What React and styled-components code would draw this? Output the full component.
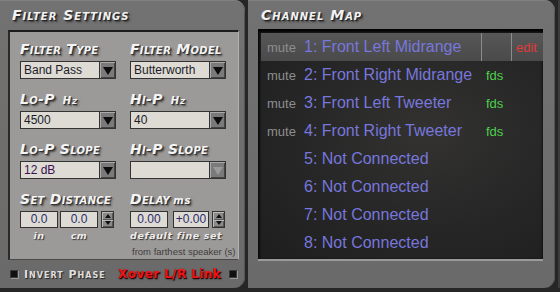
import styled, { createGlobalStyle } from "styled-components";

const GlobalStyle = createGlobalStyle`
  html, body {
    margin: 0;
    padding: 0;
    background: #262626;
    width: 560px;
    height: 292px;
    overflow: hidden;
  }
  * { box-sizing: border-box; }
`;

const Screen = styled.div`
  display: flex;
  gap: 3px;
  height: 288px;
  width: 560px;
`;

const Panel = styled.section`
  width: ${(p) => p.$width}px;
  height: 288px;
  background: linear-gradient(#727272, #6a6a6a);
  border-radius: 0 11px 11px 0;
  box-shadow: inset 0 1px 0 #808080, inset -1px 0 0 #555;
  display: flex;
  flex-direction: column;
`;

const EdgeStrip = styled.div`
  flex: 1;
  background: #747474;
  border-left: 2px solid #3c3c3c;
`;

const Title = styled.h2`
  margin: 0;
  height: ${(p) => p.$h}px;
  padding-left: ${(p) => p.$pl}px;
  display: flex;
  align-items: center;
  font-family: "DejaVu Sans", sans-serif;
  font-weight: bold;
  font-style: italic;
  font-variant: small-caps;
  font-size: 14px;
  letter-spacing: 1px;
  color: #f2f2f2;
  text-shadow: 1px 1px 0 #222, 2px 2px 2px #333;
`;

const Inset = styled.div`
  margin: 0 6px 0 8px;
  height: 230px;
  background: #9c9a98;
  border-top: 2px solid #1c1c1c;
  border-left: 2px solid #2a2a2a;
  border-right: 1px solid #b4b2b0;
  border-bottom: 1px solid #4a4a4a;
  padding: 8px 0 0 10px;
  display: grid;
  grid-template-columns: 96px 96px;
  column-gap: 14px;
  align-content: start;
`;

const Group = styled.div`
  display: flex;
  flex-direction: column;
  margin-bottom: 11px;
`;

const Label = styled.div`
  height: 18px;
  margin-bottom: 3px;
  line-height: 18px;
  white-space: nowrap;
  font-family: "DejaVu Sans", sans-serif;
  font-weight: bold;
  font-style: italic;
  font-variant: small-caps;
  font-size: 14px;
  letter-spacing: 0.3px;
  color: #f4f4f4;
  text-shadow: 1px 1px 0 #333, 2px 2px 2px #444;
`;

const Unit = styled.span`
  font-size: 10px;
  margin-left: ${(p) => (p.$lower ? 3 : 8)}px;
  font-variant: ${(p) => (p.$lower ? "normal" : "small-caps")};
  letter-spacing: 1px;
`;

const Select = styled.div`
  height: 18px;
  display: flex;
  border: 1px solid #333;
  background: #dddbd4;
`;

const SelectText = styled.div`
  flex: 1;
  padding-left: 3px;
  font-family: "Liberation Sans", sans-serif;
  font-size: 12px;
  line-height: 16px;
  color: ${(p) => p.$color || "#1c1c28"};
`;

const DropButton = styled.div`
  width: 16px;
  border-left: 1px solid #333;
  background: #7a7a7a;
  box-shadow: inset 1px 1px 0 #aaa, inset -1px -1px 0 #444;
  display: flex;
  align-items: center;
  justify-content: center;
  &::after {
    content: "";
    border-left: 5px solid transparent;
    border-right: 5px solid transparent;
    border-top: 8px solid ${(p) => (p.$disabled ? "#9a9a9a" : "#0c0c0c")};
    margin-top: 2px;
  }
`;

const NumberRow = styled.div`
  display: flex;
  align-items: center;
  height: 17px;
`;

const NumBox = styled.div`
  width: ${(p) => p.$w}px;
  margin-right: ${(p) => p.$mr}px;
  height: 17px;
  border: 1px solid #333;
  background: #dddbd4;
  text-align: center;
  font-family: "Liberation Sans", sans-serif;
  font-size: 12px;
  line-height: 15px;
  color: #2c2c6a;
`;

const Spinner = styled.div`
  width: 13px;
  height: 17px;
  display: flex;
  flex-direction: column;
  border: 1px solid #333;
  background: #8a8a8a;
`;

const SpinHalf = styled.div`
  flex: 1;
  display: flex;
  align-items: center;
  justify-content: center;
  box-shadow: inset 1px 1px 0 #bbb, inset -1px -1px 0 #555;
  &::after {
    content: "";
    border-left: 3px solid transparent;
    border-right: 3px solid transparent;
    ${(p) => (p.$up ? "border-bottom" : "border-top")}: 4px solid #111;
  }
`;

const SubRow = styled.div`
  display: flex;
  margin-top: 1px;
`;

const SubLabel = styled.div`
  width: ${(p) => p.$w}px;
  margin-right: ${(p) => p.$mr}px;
  text-align: center;
  white-space: nowrap;
  font-family: "DejaVu Sans", sans-serif;
  font-weight: bold;
  font-style: italic;
  font-size: 9.5px;
  letter-spacing: 0.6px;
  line-height: 14px;
  color: #ececec;
  text-shadow: 1px 1px 1px #333;
`;

const Note = styled.div`
  grid-column: 2;
  margin-top: -8px;
  margin-left: 2px;
  white-space: nowrap;
  font-family: "Liberation Sans", sans-serif;
  font-size: 9.5px;
  color: #3e3e3e;
`;

const BottomBar = styled.div`
  flex: 1;
  display: flex;
  align-items: center;
  padding: 0 8px 0 10px;
`;

const Led = styled.div`
  width: 8px;
  height: 8px;
  background: #101010;
  border: 1px solid #3a3a3a;
  box-shadow: 1px 1px 0 #9a9a9a;
`;

const ToggleText = styled.div`
  margin-left: 6px;
  font-family: "DejaVu Sans", sans-serif;
  font-weight: bold;
  font-variant: small-caps;
  font-size: 11px;
  letter-spacing: 1px;
  color: #dedede;
  text-shadow: 1px 1px 1px #222;
`;

const LinkText = styled.div`
  margin-left: auto;
  margin-right: 8px;
  font-family: "DejaVu Sans", sans-serif;
  font-weight: bold;
  font-size: 12px;
  letter-spacing: 0.4px;
  color: #f01414;
  text-shadow: 1px 1px 0 #300, 1px 1px 2px #000;
`;

const MapBox = styled.div`
  margin: 0 12px 0 10px;
  height: 232px;
  padding: 4px 0 0 3px;
  background: radial-gradient(ellipse at 60% 45%, #333231 0%, #262626 55%, #1e1e1e 100%);
  box-shadow: inset 0 3px 3px #000, inset 2px 0 2px #111;
  border-bottom: 2px solid #9a9a9a;
`;

const Row = styled.div`
  display: grid;
  grid-template-columns: 43px 177px 30px 1fr;
  height: 28px;
  align-items: stretch;
  background: ${(p) => (p.$active ? "linear-gradient(#575757, #4a4a4a)" : "transparent")};
`;

const Cell = styled.div`
  display: flex;
  align-items: center;
  padding-left: ${(p) => p.$pl || 0}px;
  border-left: ${(p) => (p.$divider ? "1px solid #8c8c8c" : "none")};
  font-family: "Liberation Sans", sans-serif;
  font-size: ${(p) => p.$size || 13}px;
  color: ${(p) => p.$color};
  white-space: nowrap;
`;

const channels = [
  { name: "1: Front Left Midrange", mute: true, edit: true },
  { name: "2: Front Right Midrange", mute: true, fds: true },
  { name: "3: Front Left Tweeter", mute: true, fds: true },
  { name: "4: Front Right Tweeter", mute: true, fds: true },
  { name: "5: Not Connected" },
  { name: "6: Not Connected" },
  { name: "7: Not Connected" },
  { name: "8: Not Connected" },
];

function Dropdown({ value, disabled, color }) {
  return (
    <Select>
      <SelectText $color={color}>{value}</SelectText>
      <DropButton $disabled={disabled} />
    </Select>
  );
}

function Spin() {
  return (
    <Spinner>
      <SpinHalf $up />
      <SpinHalf />
    </Spinner>
  );
}

export default function App() {
  return (
    <>
      <GlobalStyle />
      <Screen>
        <Panel $width={245}>
          <Title $h={30} $pl={12}>Filter Settings</Title>
          <Inset>
            <Group>
              <Label>Filter Type</Label>
              <Dropdown value="Band Pass" />
            </Group>
            <Group>
              <Label>Filter Model</Label>
              <Dropdown value="Butterworth" />
            </Group>
            <Group>
              <Label>
                Lo-P<Unit>Hz</Unit>
              </Label>
              <Dropdown value="4500" />
            </Group>
            <Group>
              <Label>
                Hi-P<Unit>Hz</Unit>
              </Label>
              <Dropdown value="40" />
            </Group>
            <Group>
              <Label>Lo-P Slope</Label>
              <Dropdown value="12 dB" color="#3a1050" />
            </Group>
            <Group>
              <Label>Hi-P Slope</Label>
              <Dropdown value="" disabled />
            </Group>
            <Group>
              <Label>Set Distance</Label>
              <NumberRow>
                <NumBox $w={38} $mr={2}>0.0</NumBox>
                <NumBox $w={38} $mr={3}>0.0</NumBox>
                <Spin />
              </NumberRow>
              <SubRow>
                <SubLabel $w={38} $mr={2}>in</SubLabel>
                <SubLabel $w={38} $mr={0}>cm</SubLabel>
              </SubRow>
            </Group>
            <Group>
              <Label>
                Delay<Unit $lower>ms</Unit>
              </Label>
              <NumberRow>
                <NumBox $w={38} $mr={5}>0.00</NumBox>
                <NumBox $w={36} $mr={3}>+0.00</NumBox>
                <Spin />
              </NumberRow>
              <SubRow>
                <SubLabel $w={40} $mr={3}>default</SubLabel>
                <SubLabel $w={53} $mr={0}>fine set</SubLabel>
              </SubRow>
            </Group>
            <Note>from farthest speaker (s)</Note>
          </Inset>
          <BottomBar>
            <Led />
            <ToggleText>Invert Phase</ToggleText>
            <LinkText>Xover L/R Link</LinkText>
            <Led />
          </BottomBar>
        </Panel>
        <Panel $width={307}>
          <Title $h={29} $pl={13}>Channel Map</Title>
          <MapBox>
            {channels.map((c) => (
              <Row key={c.name} $active={c.edit}>
                <Cell $pl={6} $color="#8e8e8e">{c.mute ? "mute" : ""}</Cell>
                <Cell $size={16} $color="#7777dd">{c.name}</Cell>
                <Cell $pl={5} $color="#4ccf4c" $divider={c.edit}>
                  {c.fds ? "fds" : ""}
                </Cell>
                <Cell $pl={4} $color="#e03a3a" $divider={c.edit}>
                  {c.edit ? "edit" : ""}
                </Cell>
              </Row>
            ))}
          </MapBox>
        </Panel>
        <EdgeStrip />
      </Screen>
    </>
  );
}
